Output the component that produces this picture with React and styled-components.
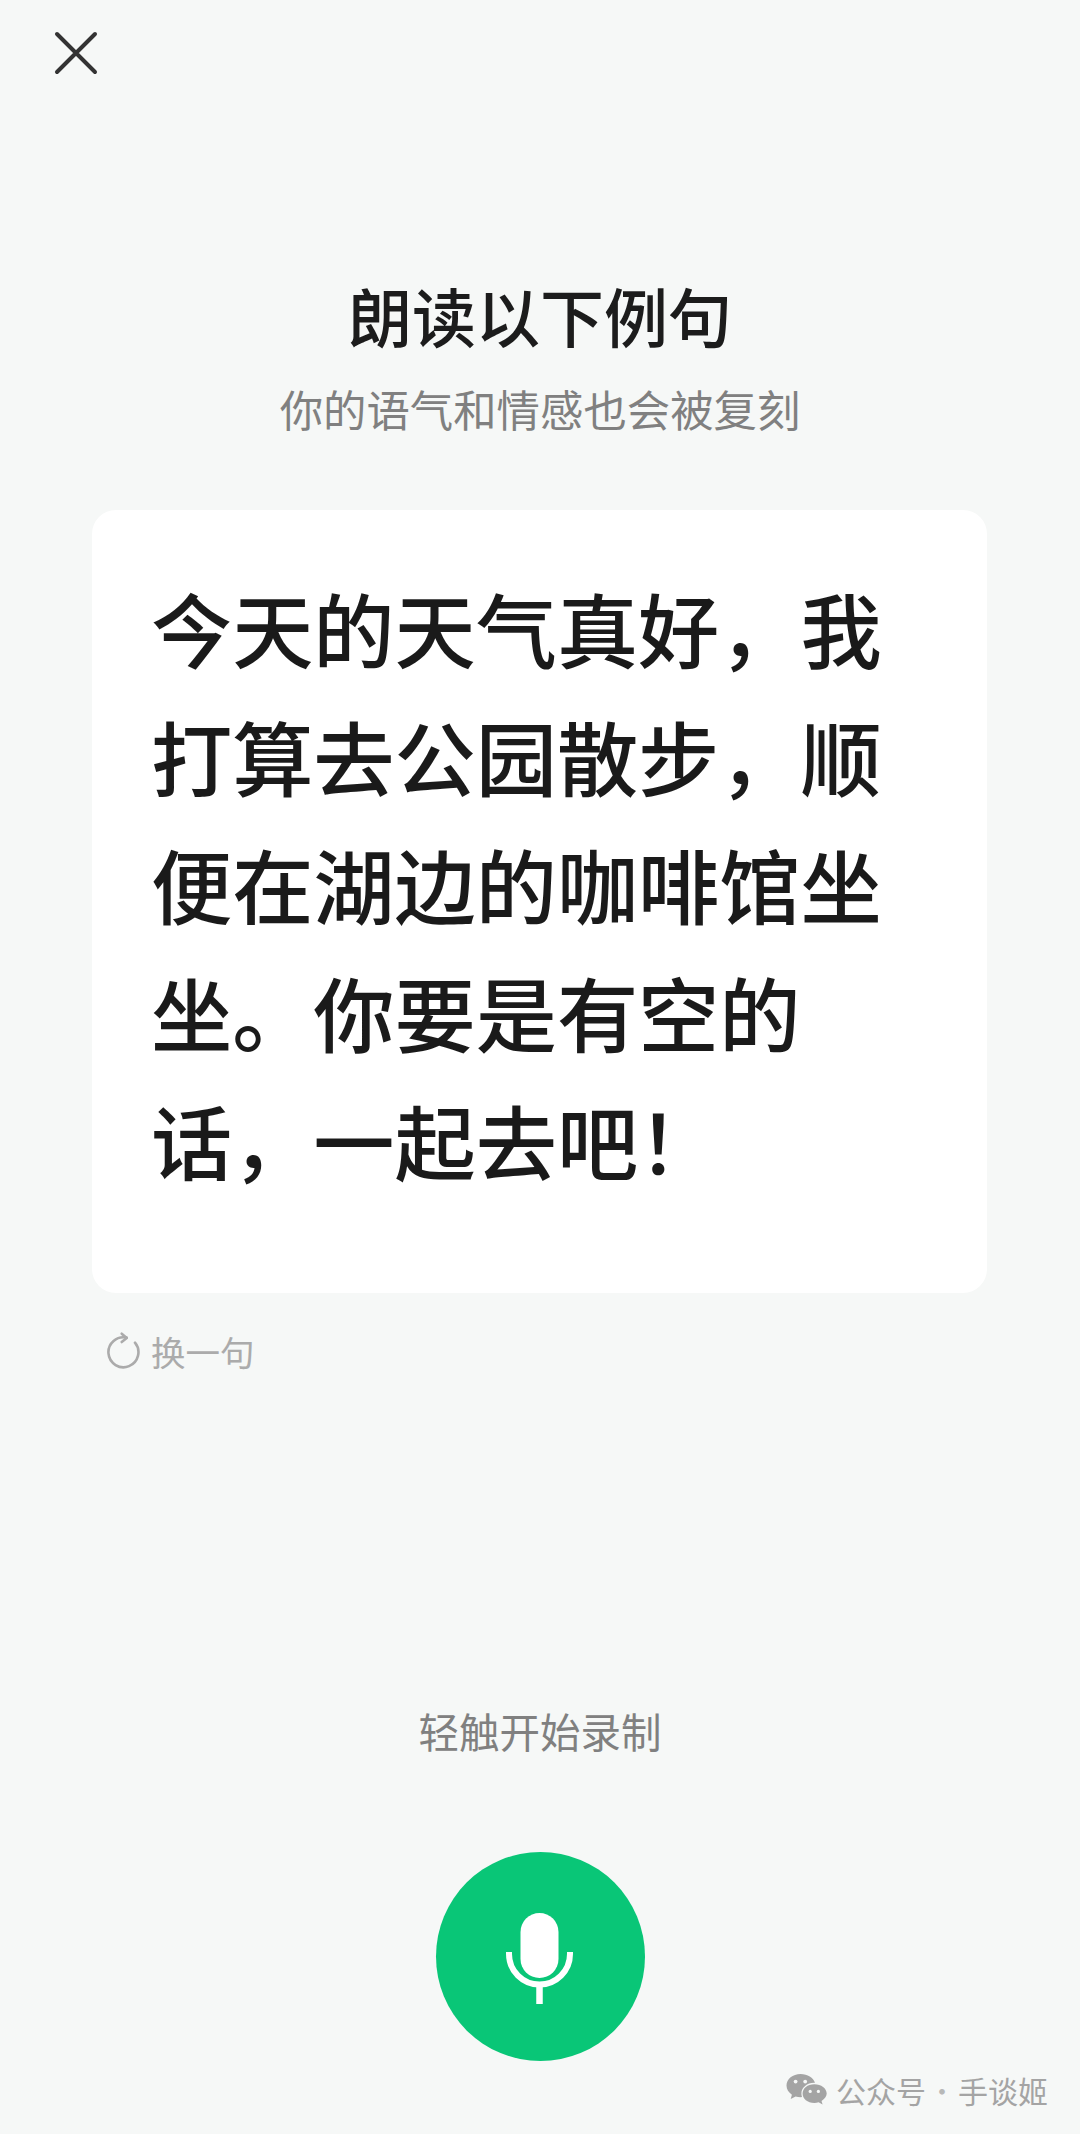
import React from "react";
import styled, { createGlobalStyle } from "styled-components";

const Global = createGlobalStyle`
  html, body { margin: 0; padding: 0; background: #f6f8f7; }
  body { font-family: "Noto Sans CJK SC", "Noto Sans", sans-serif; }
`;

const Page = styled.main`
  position: relative;
  width: 1080px;
  height: 2134px;
  overflow: hidden;
  background: #f6f8f7;
  display: flex;
  flex-direction: column;
`;

const TopBar = styled.header`
  height: 274px;
  padding: 31px 0 0 54px;
  box-sizing: border-box;
`;

const CloseButton = styled.button`
  display: block;
  width: 44px;
  height: 44px;
  padding: 0;
  border: 0;
  background: none;
  color: #333;
`;

const Heading = styled.section`
  display: flex;
  flex-direction: column;
  align-items: center;
`;

const Title = styled.h1`
  margin: 0;
  font-size: 64px;
  line-height: 80px;
  font-weight: 500;
  color: #1c1c1c;
`;

const Subtitle = styled.p`
  margin: 26px 0 0;
  font-size: 43.4px;
  line-height: 56px;
  font-weight: 400;
  color: #808080;
`;

const SentenceCard = styled.article`
  margin: 74px 93px 0 92px;
  height: 783px;
  box-sizing: border-box;
  padding: 53px 60px 0 59px;
  background: #fff;
  border-radius: 24px;
`;

const Sentence = styled.p`
  margin: 0;
  font-size: 81.2px;
  line-height: 128px;
  font-weight: 500;
  color: #1a1a1a;
`;

const SwapRow = styled.div`
  display: flex;
  align-items: center;
  gap: 8px;
  margin: 33px 0 0 107px;
  height: 50px;
  color: #ababab;
  font-size: 34.5px;
  line-height: 50px;
`;

const Spacer = styled.div`
  flex: 1;
`;

const Hint = styled.p`
  margin: 0;
  text-align: center;
  font-size: 40.5px;
  line-height: 58px;
  color: #808080;
`;

const MicButton = styled.button`
  display: flex;
  align-items: center;
  justify-content: center;
  width: 209px;
  height: 209px;
  margin: 92px auto 73px;
  padding: 4px 0 0;
  border: 0;
  border-radius: 50%;
  background: #09c677;
`;

const Watermark = styled.div`
  position: absolute;
  left: 786px;
  top: 2068px;
  display: flex;
  align-items: center;
  height: 44px;
  color: #a4a4a4;
  font-size: 30px;
  line-height: 44px;
  white-space: nowrap;
`;

const WatermarkLabel = styled.span`
  margin-left: 9px;
`;

const WatermarkDot = styled.span`
  width: 32px;
  text-align: center;
  font-weight: 300;
  opacity: 0.75;
`;

const CloseIcon = () => (
  <svg width="44" height="44" viewBox="0 0 44 44" fill="none" stroke="currentColor" strokeWidth="4" strokeLinecap="round" aria-hidden="true">
    <path d="M3 3 L41 41 M41 3 L3 41" />
  </svg>
);

const RefreshIcon = () => (
  <svg width="36" height="40" viewBox="0 0 36 40" fill="none" stroke="currentColor" strokeWidth="2.6" strokeLinecap="round" strokeLinejoin="round" aria-hidden="true">
    <path d="M28 11.7 A15 15 0 1 1 19.7 6.6" />
    <path d="M14.7 2.7 L19.7 7 L14.7 11" />
  </svg>
);

const MicIcon = () => (
  <svg width="68" height="92" viewBox="0 0 68 92" aria-hidden="true">
    <rect x="14.5" y="0" width="38" height="65" rx="19" fill="#fff" />
    <path d="M3 39 V41 A30.5 30.5 0 0 0 64 41 V39" fill="none" stroke="#fff" strokeWidth="6" strokeLinecap="butt" />
    <path d="M33.5 72 V91" fill="none" stroke="#fff" strokeWidth="6.5" />
  </svg>
);

const WeChatIcon = () => (
  <svg width="41" height="34" viewBox="0 0 41 34" aria-hidden="true">
    <path d="M14.5 1 C6.8 1 .5 6 .5 12.6 C.5 16.4 2.6 19.6 5.9 21.8 L4.7 26 L9.6 23.4 C11.4 23.9 12.8 24.2 14.5 24.2 L16 24.1 C15.6 22.9 15.4 21.8 15.4 20.6 C15.4 14.6 21 9.8 28.2 9.8 L29 9.8 C27.4 4.8 21.6 1 14.5 1 Z" fill="currentColor" />
    <circle cx="9.6" cy="8.6" r="1.9" fill="#f6f8f7" />
    <circle cx="19.2" cy="8.6" r="1.9" fill="#f6f8f7" />
    <path d="M40.7 20.6 C40.7 15.2 35.2 11.2 28.4 11.2 C21.4 11.2 16.6 15.2 16.6 20.6 C16.6 26 21.4 30 28.4 30 C29.8 30 31.2 29.7 32.6 29.3 L36.6 31.6 L35.5 28 C38.7 25.8 40.7 23.4 40.7 20.6 Z" fill="currentColor" />
    <circle cx="24.2" cy="18.4" r="1.6" fill="#f6f8f7" />
    <circle cx="32.4" cy="18.4" r="1.6" fill="#f6f8f7" />
  </svg>
);

export default function App() {
  return (
    <Page>
      <Global />
      <TopBar>
        <CloseButton aria-label="关闭">
          <CloseIcon />
        </CloseButton>
      </TopBar>
      <Heading>
        <Title>朗读以下例句</Title>
        <Subtitle>你的语气和情感也会被复刻</Subtitle>
      </Heading>
      <SentenceCard>
        <Sentence>今天的天气真好，我打算去公园散步，顺便在湖边的咖啡馆坐坐。你要是有空的话，一起去吧！</Sentence>
      </SentenceCard>
      <SwapRow>
        <RefreshIcon />
        <span>换一句</span>
      </SwapRow>
      <Spacer />
      <Hint>轻触开始录制</Hint>
      <MicButton aria-label="开始录制">
        <MicIcon />
      </MicButton>
      <Watermark>
        <WeChatIcon />
        <WatermarkLabel>公众号</WatermarkLabel>
        <WatermarkDot>·</WatermarkDot>
        <span>手谈姬</span>
      </Watermark>
    </Page>
  );
}
